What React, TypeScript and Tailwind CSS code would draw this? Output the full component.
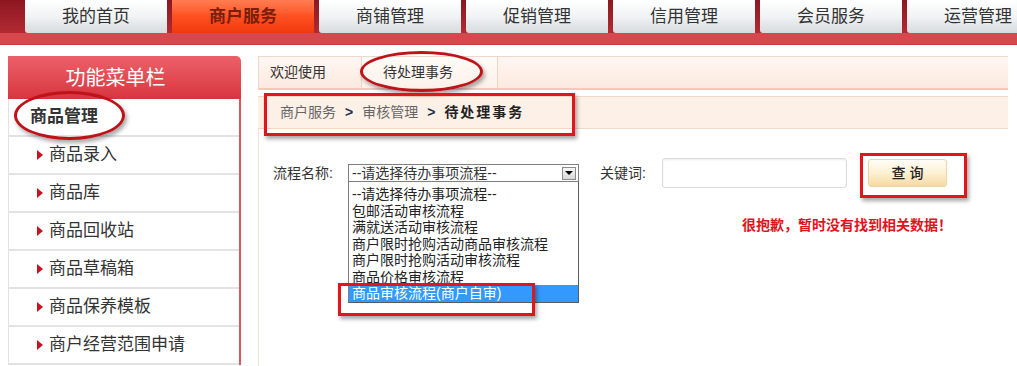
export default function App() {
  const navs = ["我的首页", "商户服务", "商铺管理", "促销管理", "信用管理", "会员服务", "运营管理"];
  const items = ["商品录入", "商品库", "商品回收站", "商品草稿箱", "商品保养模板", "商户经营范围申请"];
  const options = [
    "--请选择待办事项流程--",
    "包邮活动审核流程",
    "满就送活动审核流程",
    "商户限时抢购活动商品审核流程",
    "商户限时抢购活动审核流程",
    "商品价格审核流程",
  ];
  return (
    <div className="relative w-[1017px] h-[366px] overflow-hidden bg-white font-['Liberation_Sans','Noto_Sans_CJK_SC',sans-serif] text-[#333]">
      {/* top navigation */}
      <div className="flex h-[33px] gap-[5px] pl-[25px] bg-gradient-to-b from-[#8c1720] to-[#b32a32]">
        {navs.map((n, i) =>
          i === 1 ? (
            <div
              key={n}
              className="w-[142px] shrink-0 flex items-center justify-center text-[17px] font-bold text-[#7a1e0a] bg-gradient-to-b from-[#ff7d50] via-[#ff4f20] to-[#f03a0c]"
            >
              {n}
            </div>
          ) : (
            <div
              key={n}
              className="w-[142px] shrink-0 flex items-center justify-center text-[17px] text-[#333] rounded-bl-[3px] bg-gradient-to-b from-white via-[#f1f3f4] to-[#d6dbdf]"
            >
              {n}
            </div>
          )
        )}
      </div>
      <div className="h-[12px] bg-[#d6484e] border-b border-[#c93a41]" />

      <div className="flex pt-[11px]">
        {/* sidebar */}
        <div className="ml-[8px] w-[233px] shrink-0">
          <div className="h-[43px] rounded-tr-[5px] bg-gradient-to-b from-[#ec6069] to-[#d8343f] flex items-center justify-center pr-[18px] text-white text-[20px]">
            功能菜单栏
          </div>
          <div className="border-l border-[#e2e2e2] border-r-2 border-r-[#d9575f]">
            <div className="h-[38px] border-b-2 border-[#e3e3e3] flex items-center pl-[21px] text-[17px] font-bold text-[#333]">
              商品管理
            </div>
            {items.map((t) => (
              <div
                key={t}
                className="h-[38px] border-b-2 border-[#e3e3e3] flex items-center pl-[28px] text-[17px] text-[#333]"
              >
                <span className="w-0 h-0 border-y-[5px] border-y-transparent border-l-[6px] border-l-[#c4141f] mr-[6px]" />
                {t}
              </div>
            ))}
          </div>
        </div>

        {/* content */}
        <div className="ml-[17px] w-[750px] flex flex-col">
          <div className="h-[34px] flex border-t border-l border-[#eed8ca] border-b-2 border-b-[#f6c8ba] bg-gradient-to-b from-[#fff7f3] to-[#fde9df] text-[14px]">
            <div className="w-[102px] flex items-center pl-[11px] text-[#333]">欢迎使用</div>
            <div className="w-[137px] flex items-center pl-[21px] border-x border-[#eed5c6] bg-gradient-to-b from-[#fffbf8] to-[#fdf1ea] text-[#333]">
              待处理事务
            </div>
          </div>
          <div className="mt-[6px] h-[33px] flex items-center pl-[22px] border-y border-[#efd8c8] bg-[#fdf0e7] text-[14px]">
            <span className="text-[#666]">商户服务</span>
            <span className="mx-[9px] font-bold text-[#1d2f4f]">&gt;</span>
            <span className="text-[#666]">审核管理</span>
            <span className="mx-[9px] font-bold text-[#1d2f4f]">&gt;</span>
            <span className="font-bold text-[#222] tracking-[2px]">待处理事务</span>
          </div>
          <div className="h-[240px] border-l border-[#efe3d8] pl-[14px] pt-[29px] text-[14px]">
            <div className="flex items-center h-[30px]">
              <div className="w-[75px] text-[#333]">流程名称:</div>
              <div className="relative w-[231px] h-[18px] border border-[#7f7f7f] bg-white flex items-center pl-[3px] leading-[16px]">
                <span className="flex-1 whitespace-nowrap">--请选择待办事项流程--</span>
                <span className="mr-[2px] w-[14px] h-[13px] border border-[#8a8a8a] bg-gradient-to-b from-[#f6f6f6] to-[#d8d8d8] flex items-center justify-center">
                  <span className="w-0 h-0 border-x-[4px] border-x-transparent border-t-[4px] border-t-black" />
                </span>
                <div className="absolute left-[-1px] top-[16px] w-[231px] border border-[#7f7f7f] border-r-[#5a5a5a] border-b-[#5a5a5a] bg-white pt-[4px]">
                  {options.map((o) => (
                    <div key={o} className="h-[16.5px] leading-[16.5px] pl-[3px] whitespace-nowrap text-[#222]">
                      {o}
                    </div>
                  ))}
                  <div className="h-[16.5px] leading-[16.5px] pl-[3px] whitespace-nowrap bg-[#3399ff] text-white">
                    商品审核流程(商户自审)
                  </div>
                </div>
              </div>
              <div className="ml-[21px] w-[62px] text-[#333]">关键词:</div>
              <div className="w-[185px] h-[30px] border border-[#dcdcdc] rounded-[3px] bg-white shadow-[inset_0_1px_2px_rgba(0,0,0,0.08)]" />
              <div className="ml-[21px] w-[79px] h-[28px] border border-[#ecd5a8] rounded-[3px] bg-gradient-to-b from-[#fffdf7] via-[#fdf0d2] to-[#f6d9a2] flex items-center justify-center text-[#222] font-medium">
                查&nbsp;询
              </div>
            </div>
            <div className="mt-[27px] pl-[469px] leading-[20px] font-bold text-[#e3121b]">
              很抱歉，暂时没有找到相关数据！
            </div>
          </div>
        </div>
      </div>

      {/* annotations */}
      <div className="absolute left-[14px] top-[91px] w-[111px] h-[49px] rounded-[50%] border-[3px] border-[#bf1219] shadow-[2px_3px_4px_rgba(0,0,0,0.35)]" />
      <div className="absolute left-[360px] top-[51px] w-[123px] h-[41px] rounded-[50%] border-[3px] border-[#bf1219] shadow-[2px_3px_4px_rgba(0,0,0,0.35)]" />
      <div className="absolute left-[264px] top-[93px] w-[311px] h-[43px] border-[3px] border-[#e3141b] shadow-[2px_3px_4px_rgba(0,0,0,0.35)]" />
      <div className="absolute left-[860px] top-[153px] w-[107px] h-[45px] border-[3px] border-[#e3141b] shadow-[2px_3px_4px_rgba(0,0,0,0.35)]" />
      <div className="absolute left-[338px] top-[283px] w-[197px] h-[33px] border-[3px] border-[#e3141b] shadow-[2px_3px_4px_rgba(0,0,0,0.35)]" />
    </div>
  );
}
